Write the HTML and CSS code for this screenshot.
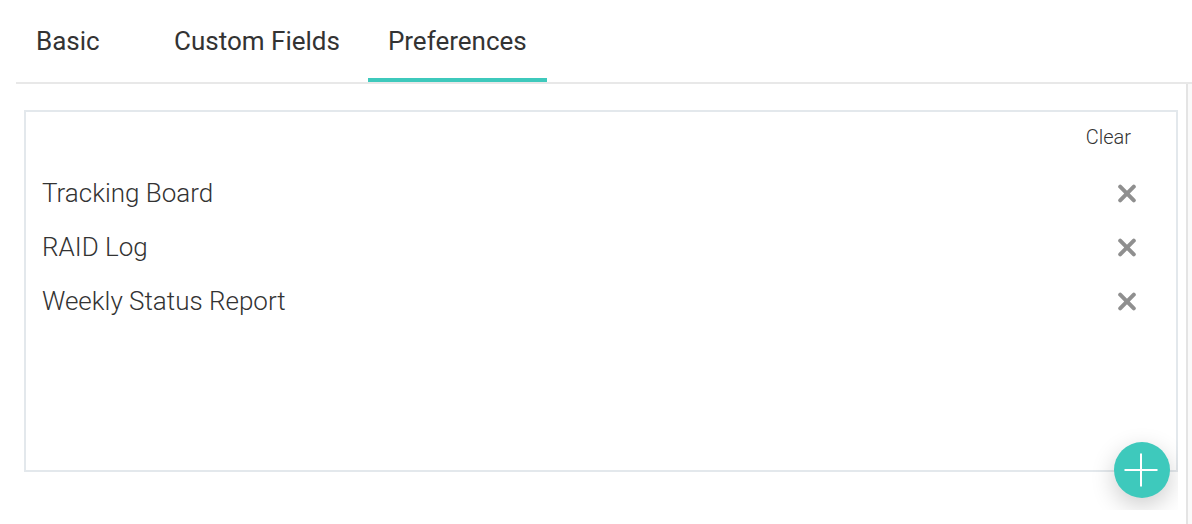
FILE: index.html
```
<!DOCTYPE html>
<html lang="en">
<head>
    <meta charset="UTF-8">
    <meta name="viewport" content="width=device-width, initial-scale=1.0">
    <title>Preferences</title>
    <link rel="stylesheet" href="styles.css">
</head>
<body>
    <div class="page">
        <!-- Tabs -->
        <div class="tabs" role="tablist">
            <button class="tab" type="button" role="tab" aria-selected="false">Basic</button>
            <button class="tab" type="button" role="tab" aria-selected="false">Custom Fields</button>
            <button class="tab active" type="button" role="tab" aria-selected="true">Preferences</button>
        </div>

        <div class="content">
            <div class="preferences">
                <div class="panel">
                    <div class="panel-header">
                        <button class="clear" type="button">Clear</button>
                    </div>
                    <ul class="list">
                        <li class="item">
                            <span>Tracking Board</span>
                            <button class="remove" type="button" aria-label="Remove Tracking Board">
                                <svg width="20" height="20" viewBox="0 0 20 20"><path d="M3.2 3.7L16.8 17.3M16.8 3.7L3.2 17.3"/></svg>
                            </button>
                        </li>
                        <li class="item">
                            <span>RAID Log</span>
                            <button class="remove" type="button" aria-label="Remove RAID Log">
                                <svg width="20" height="20" viewBox="0 0 20 20"><path d="M3.2 3.7L16.8 17.3M16.8 3.7L3.2 17.3"/></svg>
                            </button>
                        </li>
                        <li class="item">
                            <span>Weekly Status Report</span>
                            <button class="remove" type="button" aria-label="Remove Weekly Status Report">
                                <svg width="20" height="20" viewBox="0 0 20 20"><path d="M3.2 3.7L16.8 17.3M16.8 3.7L3.2 17.3"/></svg>
                            </button>
                        </li>
                    </ul>
                </div>

                <!-- Floating add button -->
                <button class="add" type="button" aria-label="Add">
                    <svg width="56" height="56" viewBox="0 0 56 56"><path d="M10.500 28H43.500M27 11.500V44.500"/></svg>
                </button>
            </div>
        </div>
    </div>
</body>
</html>
```
FILE: styles.css
```
* {
    box-sizing: border-box;
}

body {
    margin: 0;
    font-family: Roboto, sans-serif;
    font-size: 26px;
    color: #333;
    background-color: #fff;
}

button {
    margin: 0;
    padding: 0;
    border: none;
    background: none;
    font: inherit;
    color: inherit;
    cursor: pointer;
}

svg {
    display: block;
    fill: none;
}

.page {
    min-height: 100vh;
    padding-left: 16px;
    display: flex;
    flex-direction: column;
}

.tabs {
    display: flex;
    gap: 8px;
    border-bottom: 2px solid #e8e8e8;
}

.tab {
    min-width: 130px;
    height: 82px;
    padding: 4px 20px 0;
    border-bottom: 4px solid transparent;
    text-align: left;
}

.tab.active {
    border-bottom-color: #3ec9bc;
}

.content {
    flex: 1;
    padding: 26px 8px 14px;
    margin-right: 4px;
    border-right: 2px solid #e4e4e4;
    box-shadow: 4px 0 #fafafa;
}

/* clips the shadow of the add button */
.preferences {
    position: relative;
    overflow: hidden;
    padding-bottom: 38px;
}

.panel {
    min-height: 362px;
    border: 2px solid #e3e8ec;
    font-weight: 300;
}

.panel-header {
    display: flex;
    justify-content: flex-end;
    padding: 12px 45px 16px;
}

.clear {
    font-size: 20px;
    line-height: 26px;
}

.list {
    list-style: none;
    margin: 0;
    padding: 0 39px 0 16px;
}

.item {
    display: flex;
    align-items: center;
    justify-content: space-between;
    height: 54px;
}

.remove svg {
    stroke: #8f8f8f;
    stroke-width: 4;
    stroke-linecap: round;
}

.add {
    position: absolute;
    right: 8px;
    bottom: 12px;
    border-radius: 50%;
    background-color: #3ec9bc;
    box-shadow: 0 8px 24px rgba(0, 0, 0, 0.2);
}

.add svg {
    stroke: #fff;
    stroke-width: 2;
}
```
